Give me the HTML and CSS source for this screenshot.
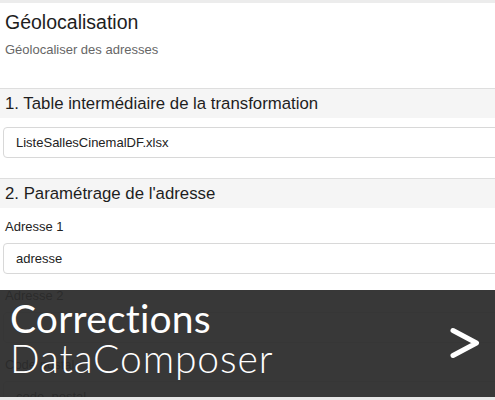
FILE: index.html
```html
<!DOCTYPE html>
<html lang="fr">
<head>
<meta charset="utf-8">
<link rel="stylesheet" href="styles.css">
</head>
<body>
<div class="page">
  <div class="topbar"></div>
  <div class="intro">
    <h1 class="title">Géolocalisation</h1>
    <p class="subtitle">Géolocaliser des adresses</p>
  </div>
  <div class="section-head">1. Table intermédiaire de la transformation</div>
  <div class="section-body">
    <div class="select"><span>ListeSallesCinemalDF.xlsx</span><span class="arrow"></span></div>
  </div>
  <div class="section-head">2. Paramétrage de l'adresse</div>
  <div class="section-body fields">
    <label class="lbl">Adresse 1</label>
    <div class="select"><span>adresse</span><span class="arrow"></span></div>
    <label class="lbl">Adresse 2</label>
    <div class="select"><span></span><span class="arrow"></span></div>
    <label class="lbl">Code postal</label>
    <div class="select"><span>code_postal</span><span class="arrow"></span></div>
  </div>
  <div class="overlay">
    <div class="caption">
      <div class="cap1">Corrections</div>
      <div class="cap2">DataComposer</div>
    </div>
    <svg class="chev" width="34" height="34" viewBox="0 0 34 34"><path d="M5 4.5 L28.5 17 L5 29.5" fill="none" stroke="#fff" stroke-width="5" stroke-linecap="round" stroke-linejoin="round"/></svg>
  </div>
  <div class="bottombar"></div>
</div>
</body>
</html>
```
FILE: styles.css
```css
html, body { margin: 0; padding: 0; }
body { width: 495px; height: 400px; overflow: hidden; background: #fff; font-family: "Liberation Sans", Arial, sans-serif; color: #222; }
.page { position: relative; width: 495px; height: 400px; overflow: hidden; }
.topbar { height: 3px; background: #ececec; }
.intro { padding: 8px 5px 0; height: 85px; box-sizing: border-box; }
.title { margin: 0; font-size: 19.5px; font-weight: 400; line-height: 22px; color: #1e1e1e; }
.subtitle { margin: 9px 0 0; font-size: 13px; color: #666; line-height: 16px; }
.section-head { width: 520px; height: 29px; border-top: 1px solid #dedede; background: #f5f5f5; font-size: 16.8px; line-height: 29px; padding-left: 5px; color: #1e1e1e; }
.section-body { padding: 9px 0 20px 3px; }
.select { width: 520px; height: 31px; border: 1px solid #d8d8d8; border-radius: 4px; background: #fff; display: flex; align-items: center; justify-content: space-between; padding: 0 12px; box-sizing: border-box; font-size: 13px; color: #222; }
.arrow { width: 4px; height: 4px; background: #333; }
.fields { padding-top: 11px; }
.lbl { display: block; font-size: 13px; line-height: 16px; padding: 0 0 8px 2px; color: #222; }
.lbl + .select { margin-bottom: 14px; }
.overlay { position: absolute; left: 0; top: 290px; width: 495px; height: 107px; background: rgba(44,44,44,0.94); display: flex; align-items: flex-start; justify-content: space-between; }
.caption { padding: 8px 0 0 10px; color: #fff; font-family: "Lato", "Open Sans", sans-serif; }
.cap1 { font-size: 39px; line-height: 40px; font-weight: 400; letter-spacing: 0.2px; }
.cap2 { font-size: 39px; line-height: 40px; font-weight: 300; letter-spacing: 0.9px; }
.chev { margin: 36px 13px 0 0; }
.bottombar { position: absolute; left: 0; top: 397px; width: 495px; height: 3px; background: #e8e8e8; }
```
